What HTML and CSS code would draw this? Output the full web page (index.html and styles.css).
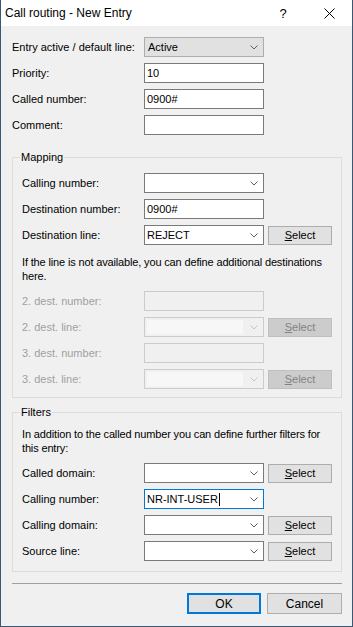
FILE: index.html
```html
<!DOCTYPE html>
<html lang="en">

<head>
    <meta charset="UTF-8">
    <title>Call routing - New Entry</title>
    <link rel="stylesheet" href="styles.css">
</head>

<body>
    <div class="window">
        <div class="titlebar">
            <span class="title">Call routing - New Entry</span>
            <span class="tbtn">?</span>
            <span class="tbtn">
                <svg width="11" height="11" viewBox="0 0 11 11"><path d="M0.5 0.5 L10.5 10.5 M10.5 0.5 L0.5 10.5" stroke="#000" stroke-width="1" fill="none"/></svg>
            </span>
        </div>

        <div class="content">
            <div class="rows">
                <div class="row">
                    <span class="label">Entry active / default line:</span>
                    <div class="field combo list"><span class="value">Active</span><svg class="chev" width="8" height="5" viewBox="0 0 8 5"><path d="M0.5 0.5 L4 4 L7.5 0.5" stroke="#606060" fill="none"/></svg></div>
                </div>
                <div class="row">
                    <span class="label">Priority:</span>
                    <div class="field"><span class="value">10</span></div>
                </div>
                <div class="row">
                    <span class="label">Called number:</span>
                    <div class="field"><span class="value">0900#</span></div>
                </div>
                <div class="row">
                    <span class="label">Comment:</span>
                    <div class="field"></div>
                </div>
            </div>

            <fieldset class="group mapping">
                <legend>Mapping</legend>
                <div class="rows">
                    <div class="row">
                        <span class="label">Calling number:</span>
                        <div class="field combo"><span class="value"></span><svg class="chev" width="8" height="5" viewBox="0 0 8 5"><path d="M0.5 0.5 L4 4 L7.5 0.5" stroke="#606060" fill="none"/></svg></div>
                    </div>
                    <div class="row">
                        <span class="label">Destination number:</span>
                        <div class="field"><span class="value">0900#</span></div>
                    </div>
                    <div class="row">
                        <span class="label">Destination line:</span>
                        <div class="field combo"><span class="value">REJECT</span><svg class="chev" width="8" height="5" viewBox="0 0 8 5"><path d="M0.5 0.5 L4 4 L7.5 0.5" stroke="#606060" fill="none"/></svg></div>
                        <button class="btn"><u>S</u>elect</button>
                    </div>
                </div>
                <p class="note">If the line is not available, you can define additional destinations<br>here.</p>
                <div class="rows disabled">
                    <div class="row">
                        <span class="label">2. dest. number:</span>
                        <div class="field"></div>
                    </div>
                    <div class="row">
                        <span class="label">2. dest. line:</span>
                        <div class="field combo"><span class="inner"></span><svg class="chev" width="8" height="5" viewBox="0 0 8 5"><path d="M0.5 0.5 L4 4 L7.5 0.5" stroke="#c4c4c4" fill="none"/></svg></div>
                        <button class="btn"><u>S</u>elect</button>
                    </div>
                    <div class="row">
                        <span class="label">3. dest. number:</span>
                        <div class="field"></div>
                    </div>
                    <div class="row">
                        <span class="label">3. dest. line:</span>
                        <div class="field combo"><span class="inner"></span><svg class="chev" width="8" height="5" viewBox="0 0 8 5"><path d="M0.5 0.5 L4 4 L7.5 0.5" stroke="#c4c4c4" fill="none"/></svg></div>
                        <button class="btn"><u>S</u>elect</button>
                    </div>
                </div>
            </fieldset>

            <fieldset class="group filters">
                <legend>Filters</legend>
                <p class="note">In addition to the called number you can define further filters for<br>this entry:</p>
                <div class="rows">
                    <div class="row">
                        <span class="label">Called domain:</span>
                        <div class="field combo"><span class="value"></span><svg class="chev" width="8" height="5" viewBox="0 0 8 5"><path d="M0.5 0.5 L4 4 L7.5 0.5" stroke="#606060" fill="none"/></svg></div>
                        <button class="btn"><u>S</u>elect</button>
                    </div>
                    <div class="row">
                        <span class="label">Calling number:</span>
                        <div class="field combo focus"><span class="value">NR-INT-USER<span class="caret"></span></span><svg class="chev" width="8" height="5" viewBox="0 0 8 5"><path d="M0.5 0.5 L4 4 L7.5 0.5" stroke="#606060" fill="none"/></svg></div>
                    </div>
                    <div class="row">
                        <span class="label">Calling domain:</span>
                        <div class="field combo"><span class="value"></span><svg class="chev" width="8" height="5" viewBox="0 0 8 5"><path d="M0.5 0.5 L4 4 L7.5 0.5" stroke="#606060" fill="none"/></svg></div>
                        <button class="btn"><u>S</u>elect</button>
                    </div>
                    <div class="row">
                        <span class="label">Source line:</span>
                        <div class="field combo"><span class="value"></span><svg class="chev" width="8" height="5" viewBox="0 0 8 5"><path d="M0.5 0.5 L4 4 L7.5 0.5" stroke="#606060" fill="none"/></svg></div>
                        <button class="btn"><u>S</u>elect</button>
                    </div>
                </div>
            </fieldset>

            <hr class="separator">

            <div class="actions">
                <button class="btn big default">OK</button>
                <button class="btn big">Cancel</button>
            </div>
        </div>
    </div>
</body>

</html>
```

FILE: styles.css
```css
body {
    margin: 0;
    background-color: #f0f0f0;
    font-family: "Liberation Sans", Arial, sans-serif;
    font-size: 11px;
    color: #000;
}

.window {
    width: 353px;
    height: 627px;
    box-sizing: border-box;
    border: 1px solid #3b5872;
    border-top: none;
    display: flex;
    flex-direction: column;
}

.titlebar {
    height: 26px;
    background-color: #ffffff;
    display: flex;
    align-items: center;
    font-size: 12px;
    padding-left: 4px;
}

.title {
    flex: 1;
}

.tbtn {
    width: 46px;
    height: 26px;
    display: flex;
    align-items: center;
    justify-content: center;
    font-size: 13px;
}

.content {
    flex: 1;
    padding: 11px 10px 0 11px;
    display: flex;
    flex-direction: column;
}

.rows {
    display: flex;
    flex-direction: column;
    gap: 6px;
}

.row {
    display: grid;
    grid-template-columns: 128px 120px 64px;
    column-gap: 4px;
    height: 20px;
    align-items: center;
}

.group .row {
    grid-template-columns: 118px 120px 64px;
}

.label {
    white-space: nowrap;
}

.field {
    height: 20px;
    box-sizing: border-box;
    border: 1px solid #7a7a7a;
    background-color: #ffffff;
    display: flex;
    align-items: center;
    padding: 0 5px 0 2px;
}

.field .value {
    flex: 1;
    display: flex;
    align-items: center;
}

.combo.list {
    background-color: #e1e1e1;
    border-color: #adadad;
    padding-left: 3px;
}

.combo.focus {
    border-color: #0078d7;
}

.chev {
    margin-left: auto;
}

.caret {
    display: inline-block;
    width: 1px;
    height: 13px;
    background-color: #000;
    margin-left: 1px;
}

.btn {
    height: 19px;
    box-sizing: border-box;
    border: 1px solid #adadad;
    background-color: #e1e1e1;
    font-family: "Liberation Sans", Arial, sans-serif;
    font-size: 11px;
    color: #000;
    padding: 0;
}

.group {
    margin: 0;
    border: 1px solid #dcdcdc;
    padding: 9px 9px 8px 9px;
    min-width: 0;
}

.group legend {
    padding: 0 1px;
    margin-left: -2px;
    line-height: 13px;
}

.mapping {
    margin-top: 16px;
}

.filters {
    margin-top: 8px;
    padding-top: 8px;
    padding-bottom: 10px;
}

.note {
    margin: 10px 0 8px 0;
    line-height: 14px;
    white-space: nowrap;
    letter-spacing: -0.15px;
}

.filters .note {
    margin-top: 0;
}

.disabled .label {
    color: #a0a0a0;
}

.disabled .field {
    border-color: #cccccc;
    background-color: #f0f0f0;
}

.disabled .inner {
    flex: 1;
    height: 14px;
    margin-right: 7px;
    background-color: #f7f7f7;
}

.disabled .btn {
    background-color: #cccccc;
    border-color: #bfbfbf;
    color: #838383;
}

.separator {
    margin: 11px 0 0 0;
    border: none;
    border-top: 1px solid #a0a0a0;
    height: 0;
}

.actions {
    margin-top: 9px;
    display: flex;
    justify-content: flex-end;
    gap: 6px;
}

.btn.big {
    width: 75px;
    height: 21px;
    font-size: 12px;
}

.btn.default {
    width: 74px;
    border: 2px solid #0078d7;
}
```
